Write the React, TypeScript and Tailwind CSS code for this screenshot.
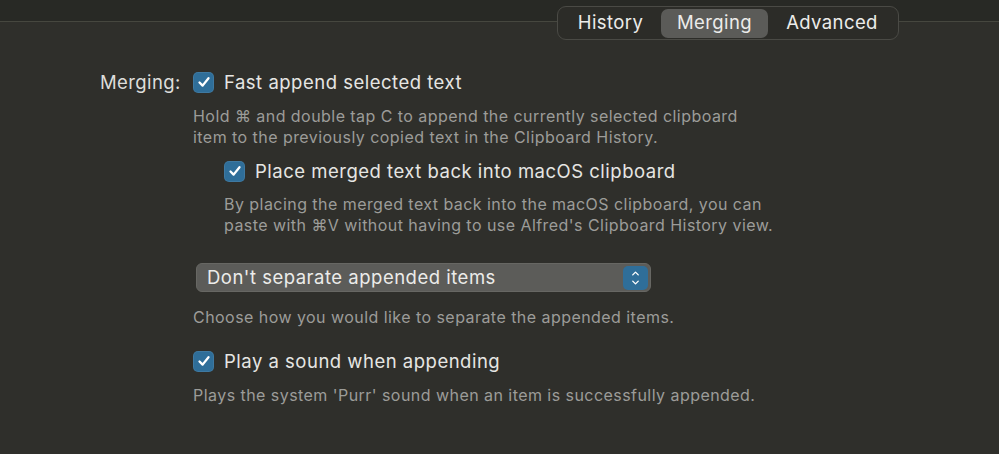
import { ChevronDown, ChevronUp } from "lucide-react";

const Check = () => (
    <div className="w-[21px] h-[21px] rounded-[5px] bg-[#2f6e99] flex items-center justify-center shrink-0 shadow-[inset_0_0_0_1px_rgba(255,255,255,0.08)]">
        <svg width="14" height="14" viewBox="0 0 14 14" fill="none">
            <path d="M2.5 7.5 L5.6 10.6 L11.5 3.2" stroke="white" strokeWidth="2.3" strokeLinecap="round" strokeLinejoin="round" />
        </svg>
    </div>
);

const CheckRow = ({ label }: { label: string }) => (
    <div className="flex items-center gap-[10px]">
        <Check />
        <span className="text-[18.5px] tracking-[0.5px] text-[#e6e6e3] leading-[22px]">{label}</span>
    </div>
);

const Desc = ({ children, className = "" }: { children: React.ReactNode; className?: string }) => (
    <p className={"text-[16px] tracking-[0.45px] leading-[21px] text-[#9c9c99] " + className}>{children}</p>
);

export default function App() {
    const tabs = ["History", "Merging", "Advanced"];

    return (
        <div className="w-[999px] h-[454px] bg-[#2f2f2b] overflow-hidden font-['Inter','Noto_Sans',sans-serif] antialiased">
            {/* Top band with tab control */}
            <div className="relative h-[22px] bg-[#282925] border-b border-[#46473f]">
                <div className="absolute left-[557px] top-[6px] w-[342px] h-[34px] rounded-[9px] bg-[#2c2c28] border border-[#4a4a45] flex items-center px-[2px]">
                    {tabs.map((t) => (
                        <div
                            key={t}
                            className={
                                t === "Merging"
                                    ? "h-[29px] w-[107px] rounded-[7px] bg-[#5b5b58] flex items-center justify-center text-[18.5px] tracking-[0.4px] text-[#ececea]"
                                    : t === "History"
                                    ? "h-[29px] w-[101px] flex items-center justify-center text-[18.5px] tracking-[0.4px] text-[#ececea]"
                                    : "h-[29px] flex-1 flex items-center justify-center text-[18.5px] tracking-[0.4px] text-[#ececea]"
                            }
                        >
                            {t}
                        </div>
                    ))}
                </div>
            </div>

            <div className="flex pt-[49px] pl-[100px]">
                <div className="w-[93px] text-[18.5px] tracking-[0.4px] text-[#dededb] leading-[22px]">Merging:</div>
                <div className="flex flex-col">
                    <CheckRow label="Fast append selected text" />
                    <Desc className="mt-[13px]">
                        Hold ⌘ and double tap C to append the currently selected clipboard
                        <br />
                        item to the previously copied text in the Clipboard History.
                    </Desc>

                    <div className="pl-[31px] mt-[12px]">
                        <CheckRow label="Place merged text back into macOS clipboard" />
                        <Desc className="mt-[12px]">
                            By placing the merged text back into the macOS clipboard, you can
                            <br />
                            paste with ⌘V without having to use Alfred's Clipboard History view.
                        </Desc>
                    </div>

                    <div className="mt-[27px] ml-[3px] w-[455px] h-[29px] rounded-[6px] bg-[#5c5c59] border border-[#676763] flex items-center justify-between pl-[10px] pr-[2px]">
                        <span className="text-[18.5px] tracking-[0.5px] text-[#ececea]">Don't separate appended items</span>
                        <div className="w-[25px] h-[24px] rounded-[5px] bg-[#2f6e99] flex flex-col items-center justify-center">
                            <ChevronUp size={11} strokeWidth={3} className="text-white -mb-[1px]" />
                            <ChevronDown size={11} strokeWidth={3} className="text-white -mt-[1px]" />
                        </div>
                    </div>
                    <Desc className="mt-[15px]">Choose how you would like to separate the appended items.</Desc>

                    <div className="mt-[22px]">
                        <CheckRow label="Play a sound when appending" />
                    </div>
                    <Desc className="mt-[13px]">Plays the system 'Purr' sound when an item is successfully appended.</Desc>
                </div>
            </div>
        </div>
    );
}
